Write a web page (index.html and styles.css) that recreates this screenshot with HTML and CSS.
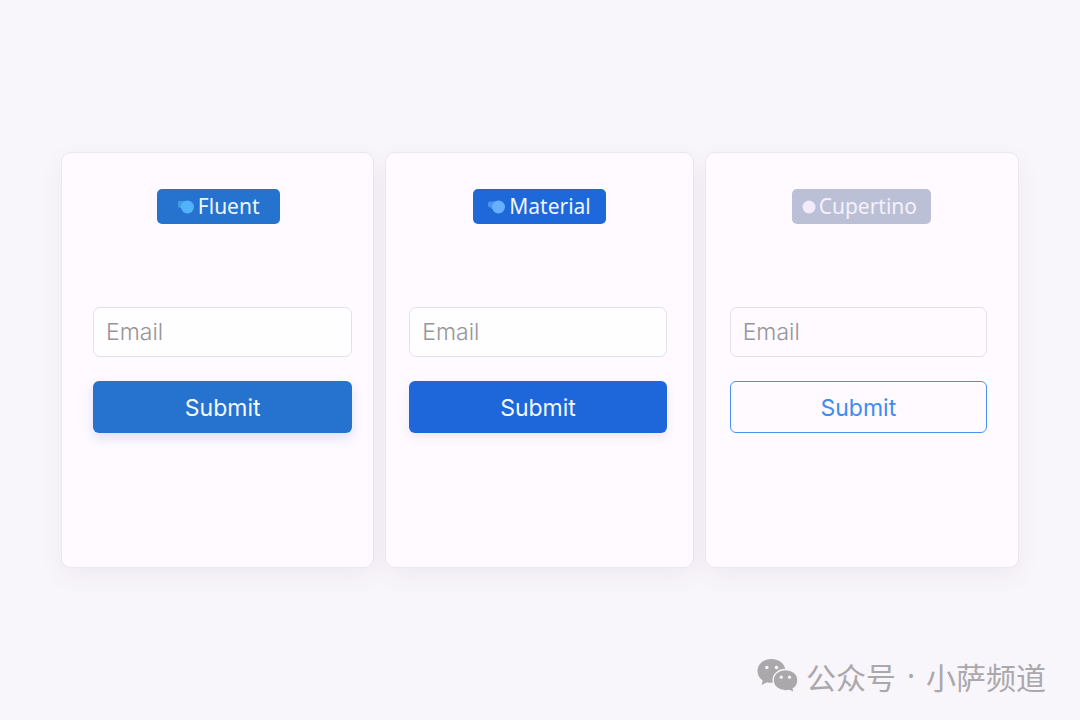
FILE: index.html
```html
<!DOCTYPE html>
<html lang="zh-CN">
<head>
<meta charset="utf-8">
<meta name="viewport" content="width=device-width, initial-scale=1">
<title>Design styles</title>
<link rel="stylesheet" href="styles.css">
</head>
<body class="page">
<main class="cards">
  <section class="card card-fluent">
    <h2 class="badge">
      <svg class="badge-icon" width="18" height="14" viewBox="0 0 18 14" aria-hidden="true"><path d="M1 2Q1 1 2 1H9V8H3Q1 8 1 6Z" fill="#409de2"/><circle cx="10.500" cy="7" r="6.500" fill="#50b3fb"/></svg>
      <span>Fluent</span>
    </h2>
    <form class="form">
      <input class="field" type="email" placeholder="Email" aria-label="Email">
      <button class="submit" type="button">Submit</button>
    </form>
  </section>
  <section class="card card-material">
    <h2 class="badge">
      <svg class="badge-icon" width="18" height="14" viewBox="0 0 18 14" aria-hidden="true"><path d="M0 3Q0 1.500 1.500 1.500H9V9H4Q3 7.500 1 7Q0 7 0 5.500Z" fill="#4a94ef"/><circle cx="10.500" cy="7" r="6.500" fill="#66b0ff"/></svg>
      <span>Material</span>
    </h2>
    <form class="form">
      <input class="field" type="email" placeholder="Email" aria-label="Email">
      <button class="submit" type="button">Submit</button>
    </form>
  </section>
  <section class="card card-cupertino">
    <h2 class="badge">
      <svg class="badge-icon" width="14" height="14" viewBox="0 0 14 14" aria-hidden="true"><circle cx="7" cy="7" r="6.500" fill="#f3ebfb"/></svg>
      <span>Cupertino</span>
    </h2>
    <form class="form">
      <input class="field" type="email" placeholder="Email" aria-label="Email">
      <button class="submit" type="button">Submit</button>
    </form>
  </section>
</main>
<footer class="credit">
  <svg class="credit-icon" width="42" height="36" viewBox="0 0 42 36" aria-hidden="true">
    <path d="M14.500 1C6.500 1 .5 6.300.5 13c0 4 2 7.300 5.300 9.500L4.500 27l5.600-2.800c1.400.4 2.900.6 4.400.6C22.500 24.800 28.500 19.500 28.500 13S22.500 1 14.500 1Z" fill="#aaa8ab"/>
    <path d="M28.500 11.500c-7 0-12.300 4.600-12.300 10.700s5.300 10.700 12.300 10.700c1.400 0 2.700-.2 3.900-.5l5 2.500-1.200-4c2.900-2 4.700-5 4.700-8.700 0-6.100-5.400-10.700-12.400-10.700Z" fill="#aaa8ab" stroke="#f7f3fa" stroke-width="1.400"/>
    <g fill="#f7f3fa"><circle cx="9.800" cy="9.500" r="1.800"/><circle cx="19.500" cy="9.500" r="1.800"/><circle cx="24.200" cy="19.200" r="1.600"/><circle cx="32.500" cy="19.200" r="1.600"/></g>
  </svg>
  <p class="credit-text"><span>公众号</span><span class="dot">·</span><span>小萨频道</span></p>
</footer>
</body>
</html>
```
FILE: styles.css
```css
* {
  box-sizing: border-box;
}

.page {
  margin: 0;
  min-height: 100vh;
  display: grid;
  grid-template-rows: 1fr auto 1fr;
  background: #f9f6fb;
  font-family: Inter, "Liberation Sans", sans-serif;
}

.cards {
  grid-row: 2;
  display: grid;
  grid-template-columns: 313fr 308fr 314fr;
  gap: 11px;
  padding: 0 61px;
}

.card {
  display: flex;
  flex-direction: column;
  align-items: center;
  gap: 83px;
  padding: 36px 24px 134px;
  border: 1px solid #ebe7ee;
  border-radius: 10px;
  background: #fefaff;
  box-shadow: 0 8px 24px rgba(60, 40, 90, 0.06);
}

.card-fluent {
  padding-left: 31px;
  padding-right: 21px;
}

.card-material {
  padding-left: 23px;
  padding-right: 26px;
}

.card-cupertino {
  padding-right: 31px;
}

.badge {
  display: flex;
  align-items: center;
  justify-content: center;
  gap: 3px;
  height: 35px;
  margin: 0;
  padding: 0 15px;
  border-radius: 5px;
  color: #eef5ff;
  background: #2673cf;
  font: 400 21px/35px "Noto Sans", sans-serif;
}

.card-fluent .badge {
  padding: 0 20px;
  margin-right: 9px;
}

.card-material .badge {
  margin-left: 3px;
  background: #1f68da;
}

.card-cupertino .badge {
  padding: 0 14px 0 10px;
  margin-left: 6px;
  background: #bbc0d6;
  color: #f5f1fb;
}

.form {
  display: grid;
  gap: 24px;
  width: 100%;
}

.field {
  width: 100%;
  height: 50px;
  padding: 0 12px;
  border: 1px solid #e2e1e5;
  border-radius: 7px;
  background: #fefdff;
  color: #444;
  font: 300 23px/30px Inter, sans-serif;
}

.field::placeholder {
  color: #969598;
  opacity: 1;
}

.card-cupertino .field {
  background: transparent;
}

.submit {
  height: 52px;
  padding: 2px 0 0;
  border: 0;
  border-radius: 6px;
  background: #2673cf;
  box-shadow: 0 5px 12px rgba(60, 80, 220, 0.16);
  color: #f4f8ff;
  font: 400 23px/30px Inter, sans-serif;
}

.card-material .submit {
  background: #1d67da;
  box-shadow: 0 4px 10px rgba(60, 70, 120, 0.1);
}

.card-cupertino .submit {
  border: 1px solid #4a92f2;
  background: transparent;
  box-shadow: none;
  color: #3f8cf0;
}

.credit {
  grid-row: 3;
  align-self: end;
  display: flex;
  align-items: center;
  justify-content: flex-end;
  gap: 7px;
  padding: 0 34px 24px 0;
  color: #aaa8ab;
  font: 400 30px/40px "Noto Sans CJK SC", sans-serif;
}

.credit-text {
  display: flex;
  gap: 11px;
  margin: 0;
}

.dot {
  font-family: "Noto Sans", sans-serif;
}
```
